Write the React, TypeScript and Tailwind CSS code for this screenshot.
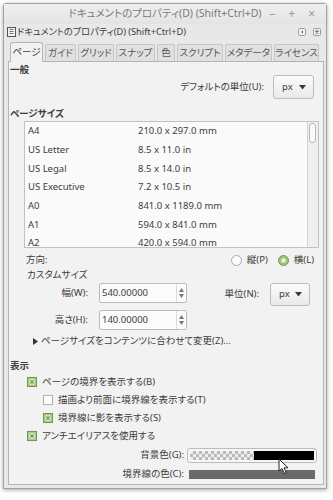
import React from "react";

const sizes = [
  ["A4", "210.0 x 297.0 mm"],
  ["US Letter", "8.5 x 11.0 in"],
  ["US Legal", "8.5 x 14.0 in"],
  ["US Executive", "7.2 x 10.5 in"],
  ["A0", "841.0 x 1189.0 mm"],
  ["A1", "594.0 x 841.0 mm"],
  ["A2", "420.0 x 594.0 mm"],
];

const tabs: [string, string][] = [
  ["ページ", "w-[33px]"],
  ["ガイド", "w-[31px]"],
  ["グリッド", "w-[36px]"],
  ["スナップ", "w-[39px]"],
  ["色", "w-[18px]"],
  ["スクリプト", "w-[46px]"],
  ["メタデータ", "w-[47px]"],
  ["ライセンス", "w-[45px]"],
];

function Check({ on }: { on: boolean }) {
  return (
    <svg width="10" height="10" viewBox="0 0 10 10" className="shrink-0">
      {on ? (
        <>
          <rect x="0.5" y="0.5" width="9" height="9" fill="#a9cc8a" stroke="#6d9a4c" />
          <rect x="2.5" y="2.5" width="5" height="5" fill="#eef6e6" />
          <path d="M3.3 3.3 L6.7 6.7 M6.7 3.3 L3.3 6.7" stroke="#5b8a3e" strokeWidth="1.1" />
        </>
      ) : (
        <rect x="0.5" y="0.5" width="9" height="9" fill="#fbfbfb" stroke="#b4b4b4" />
      )}
    </svg>
  );
}

function Radio({ on }: { on: boolean }) {
  return (
    <svg width="11" height="11" viewBox="0 0 11 11" className="shrink-0">
      {on ? (
        <>
          <circle cx="5.5" cy="5.5" r="5" fill="#9cc47a" stroke="#6f9d50" />
          <circle cx="5.5" cy="5.5" r="2.2" fill="#e6f2da" />
        </>
      ) : (
        <circle cx="5.5" cy="5.5" r="5" fill="#fafafa" stroke="#aaaaaa" />
      )}
    </svg>
  );
}

function Combo({ cls }: { cls: string }) {
  return (
    <div className={`flex items-center justify-between rounded-[3px] border border-[#bcbcbc] bg-gradient-to-b from-[#fbfbfb] to-[#e9e9e9] pl-[8px] pr-[7px] ${cls}`}>
      <span>px</span>
      <svg width="7" height="5" viewBox="0 0 7 5">
        <path d="M0 0 H7 L3.5 4.5 Z" fill="#3a3a3a" />
      </svg>
    </div>
  );
}

function Spin({ value }: { value: string }) {
  return (
    <div className="flex h-[20px] w-[88px] items-center rounded-[2px] border border-[#bcbcbc] bg-[#fbfbfb]">
      <span className="flex-1 pl-[2px]">{value}</span>
      <div className="flex h-full w-[10px] flex-col items-center justify-center gap-[2px] border-l border-[#dcdcdc]">
        <svg width="5" height="4" viewBox="0 0 5 4"><path d="M0 4 H5 L2.5 0 Z" fill="#777" /></svg>
        <svg width="5" height="4" viewBox="0 0 5 4"><path d="M0 0 H5 L2.5 4 Z" fill="#777" /></svg>
      </div>
    </div>
  );
}

export default function App() {
  return (
    <div className="relative h-[500px] w-[333px] overflow-hidden bg-white pl-[3px] pt-[3px] font-['Noto_Sans','Noto_Sans_CJK_JP',sans-serif] text-[9.5px] text-[#3c3c3c] [font-feature-settings:'palt']">
      <div className="flex h-[486px] w-[324px] flex-col rounded-t-[3px] border border-[#a2a2a2] bg-[#e8e8e8] shadow-[0_1px_4px_rgba(0,0,0,0.35)]">
        {/* title bar */}
        <div className="grid h-[21px] grid-cols-[1fr_auto_1fr] items-center bg-gradient-to-b from-[#efefef] to-[#e4e4e4] text-[10.5px] text-[#7a7a7a]">
          <div />
          <div>ドキュメントのプロパティ(D) (Shift+Ctrl+D)</div>
          <div className="flex justify-end gap-[13px] pr-[11px] text-[12px] text-[#9a9a9a]">
            <span>–</span>
            <span>+</span>
            <span>×</span>
          </div>
        </div>

        {/* dock header */}
        <div className="flex h-[16px] items-center pl-[3px] pr-[5px] text-[9.2px]">
          <svg width="9" height="10" viewBox="0 0 9 10" className="mr-[1px]">
            <rect x="0.5" y="0.5" width="8" height="9" fill="#f4f4f4" stroke="#555" />
            <path d="M2.5 2.5 H6.5 M2.5 4.5 H6.5 M2.5 6.5 H6.5" stroke="#555" strokeWidth="0.8" />
          </svg>
          <span className="flex-1">ドキュメントのプロパティ(D) (Shift+Ctrl+D)</span>
          <div className="flex gap-[7px]">
            <svg width="8" height="8" viewBox="0 0 8 8">
              <rect x="0.5" y="0.5" width="7" height="7" rx="1" fill="#f2f2f2" stroke="#9a9a9a" />
              <path d="M5 2.5 L3 4 L5 5.5 Z" fill="#666" />
            </svg>
            <svg width="8" height="8" viewBox="0 0 8 8">
              <rect x="0.5" y="0.5" width="7" height="7" rx="1" fill="#f2f2f2" stroke="#9a9a9a" />
              <path d="M2.5 2.5 L5.5 5.5 M5.5 2.5 L2.5 5.5" stroke="#666" strokeWidth="1.2" />
            </svg>
          </div>
        </div>

        {/* tabs */}
        <div className="flex h-[23px] items-end gap-[2px] pl-[6px]">
          {tabs.map(([label, w], i) =>
            i === 0 ? (
              <div key={label} className={`relative z-10 -mb-[1px] flex h-[20px] items-center justify-center rounded-t-[3px] border border-b-0 border-[#b4b4b4] bg-[#f2f2f2] ${w}`}>
                {label}
              </div>
            ) : (
              <div key={label} className={`flex h-[17px] items-center justify-center rounded-t-[2px] border border-b-0 border-[#c6c6c6] bg-[#e0e0e0] text-[#555] ${w}`}>
                {label}
              </div>
            )
          )}
        </div>

        {/* panel */}
        <div className="relative mb-[3px] ml-[4px] mr-[2px] flex flex-1 flex-col border border-[#b4b4b4] bg-[#f2f2f2]">
          <div className="flex h-[13px] items-center pl-[1px] pt-[3px] font-bold">一般</div>

          <div className="flex h-[24px] items-center justify-end gap-[9px] pr-[9px]">
            <span>デフォルトの単位(U):</span>
            <Combo cls="h-[24px] w-[41px]" />
          </div>

          <div className="flex h-[22px] items-end pl-[1px] font-bold leading-[14px]">ページサイズ</div>

          <div className="ml-[15px] mr-[4px] flex h-[127px] overflow-hidden border border-[#c2c2c2] bg-[#fafafa]">
            <div className="flex-1">
              {sizes.map(([name, dim]) => (
                <div key={name} className="flex h-[18.7px] items-center pl-[3px]">
                  <span className="w-[110px]">{name}</span>
                  <span>{dim}</span>
                </div>
              ))}
            </div>
            <div className="w-[11px] border-l border-[#d4d4d4] bg-[#efefef] pl-[1px] pt-[1px]">
              <div className="h-[20px] w-[7px] rounded-[3px] border border-[#b8b8b8] bg-[#fafafa]" />
            </div>
          </div>

          <div className="mt-[4px] flex h-[16px] items-center pl-[17px] pr-[9px]">
            <span className="flex-1">方向:</span>
            <Radio on={false} />
            <span className="ml-[5px] mr-[10px]">縦(P)</span>
            <Radio on={true} />
            <span className="ml-[5px]">横(L)</span>
          </div>

          <div className="flex h-[15px] items-center pl-[18px]">カスタムサイズ</div>

          <div className="flex h-[23px] items-start">
            <span className="flex h-[20px] w-[79px] items-center justify-end">幅(W):</span>
            <div className="ml-[11px]">
              <Spin value="540.00000" />
            </div>
            <div className="ml-auto flex items-center gap-[11px] pr-[13px]">
              <span>単位(N):</span>
              <Combo cls="h-[23px] w-[40px]" />
            </div>
          </div>

          <div className="mt-[4px] flex h-[22px] items-start">
            <span className="flex h-[20px] w-[79px] items-center justify-end">高さ(H):</span>
            <div className="ml-[11px]">
              <Spin value="140.00000" />
            </div>
          </div>

          <div className="flex h-[18px] items-center pl-[24px]">
            <svg width="5" height="7" viewBox="0 0 5 7" className="mr-[3px]">
              <path d="M0 0 L5 3.5 L0 7 Z" fill="#333" />
            </svg>
            <span>ページサイズをコンテンツに合わせて変更(Z)...</span>
          </div>

          <div className="mt-[9px] flex h-[14px] items-center pl-[1px] font-bold">表示</div>

          <div className="flex h-[18px] items-center gap-[5px] pl-[18px]">
            <Check on={true} />
            <span>ページの境界を表示する(B)</span>
          </div>
          <div className="flex h-[18px] items-center gap-[5px] pl-[34px]">
            <Check on={false} />
            <span>描画より前面に境界線を表示する(T)</span>
          </div>
          <div className="flex h-[18px] items-center gap-[5px] pl-[34px]">
            <Check on={true} />
            <span>境界線に影を表示する(S)</span>
          </div>
          <div className="flex h-[18px] items-center gap-[5px] pl-[18px]">
            <Check on={true} />
            <span>アンチエイリアスを使用する</span>
          </div>

          <div className="mt-[2px] flex h-[17px] items-center justify-end gap-[3px] pr-[6px]">
            <span>背景色(G):</span>
            <div className="flex h-[15px] w-[130px] rounded-[3px] border border-[#bcbcbc] bg-[#f6f6f6] p-[2px]">
              <div className="w-[64px] bg-[repeating-conic-gradient(#b9b9b9_0%_25%,#eeeeee_0%_50%)] bg-[length:6px_6px]" />
              <div className="flex-1 bg-black" />
            </div>
          </div>

          <div className="flex h-[20px] items-center justify-end gap-[5px] pr-[8px]">
            <span>境界線の色(C):</span>
            <div className="h-[9px] w-[126px] bg-[#6a6a6a]" />
          </div>
        </div>
      </div>

      {/* mouse pointer */}
      <svg width="12" height="17" viewBox="0 0 12 17" className="absolute left-[278px] top-[458px]">
        <path d="M1 1 L1 13 L4 10.5 L6.2 15.5 L8.2 14.6 L6 9.8 L10 9.8 Z" fill="#fff" stroke="#222" strokeWidth="1" strokeLinejoin="round" />
      </svg>
    </div>
  );
}
